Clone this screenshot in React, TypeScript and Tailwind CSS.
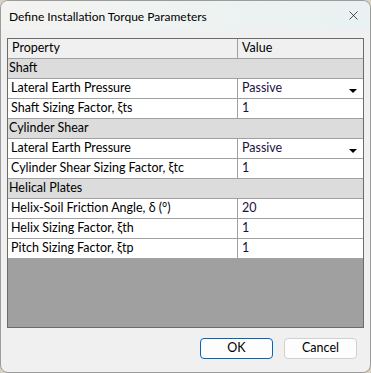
import { X } from 'lucide-react'

type Row =
  | { kind: 'cat'; label: string }
  | { kind: 'prop'; label: string; value: string; combo?: boolean }

const rows: Row[] = [
  { kind: 'cat', label: 'Shaft' },
  { kind: 'prop', label: 'Lateral Earth Pressure', value: 'Passive', combo: true },
  { kind: 'prop', label: 'Shaft Sizing Factor, ξts', value: '1' },
  { kind: 'cat', label: 'Cylinder Shear' },
  { kind: 'prop', label: 'Lateral Earth Pressure', value: 'Passive', combo: true },
  { kind: 'prop', label: 'Cylinder Shear Sizing Factor, ξtc', value: '1' },
  { kind: 'cat', label: 'Helical Plates' },
  { kind: 'prop', label: 'Helix-Soil Friction Angle, δ (°)', value: '20' },
  { kind: 'prop', label: 'Helix Sizing Factor, ξth', value: '1' },
  { kind: 'prop', label: 'Pitch Sizing Factor, ξtp', value: '1' },
]

function GridRow({ row }: { row: Row }) {
  if (row.kind === 'cat') {
    return (
      <div className="h-[20px] flex items-center pl-[1px] bg-[#dcdcdc] border-b border-[#a0a0a0]">
        {row.label}
      </div>
    )
  }
  return (
    <div className="h-[20px] flex bg-white border-b border-[#a0a0a0]">
      <div className="w-[230px] shrink-0 flex items-center pl-[3px] border-r border-[#a0a0a0]">
        {row.label}
      </div>
      <div className="flex-1 flex items-center pl-[4px] pr-[6px] text-[#1b1040]">
        <span className="flex-1">{row.value}</span>
        {row.combo && (
          <span className="mt-[4px] w-0 h-0 border-l-[4px] border-r-[4px] border-t-[4px] border-l-transparent border-r-transparent border-t-black" />
        )}
      </div>
    </div>
  )
}

export default function App() {
  return (
    <div className="w-[371px] h-[373px] bg-[#d8d2c6]">
      <div
        className="w-[371px] h-[373px] rounded-[8px] border border-[#9c9c9c] bg-[#f0f0f0] overflow-hidden flex flex-col text-[12.5px] text-black"
        style={{ fontFamily: 'Lato, "Noto Sans", sans-serif' }}
      >
        <div className="h-[29px] shrink-0 flex items-center justify-between pl-[8px] pr-[9px] bg-gradient-to-r from-[#f3f3f1] via-[#eef3f1] to-[#e9f1f2]">
          <span className="leading-none text-[12px] pt-[2px]">Define Installation Torque Parameters</span>
          <X size={15} strokeWidth={1.2} className="text-[#1a1a1a]" />
        </div>

        <div className="mt-[8px] ml-[6px] w-[357px] h-[290px] border border-[#6b6b6b] bg-[#a0a0a0] flex flex-col">
          <div className="h-[20px] flex bg-[#f0f0f0] border-b border-[#a0a0a0]">
            <div className="w-[230px] shrink-0 flex items-center pl-[4px] border-r border-[#a0a0a0]">
              Property
            </div>
            <div className="flex-1 flex items-center pl-[4px]">Value</div>
          </div>
          {rows.map((r, i) => (
            <GridRow key={i} row={r} />
          ))}
        </div>

        <div className="mt-[10px] flex justify-end gap-[11px] pr-[13px]">
          <button className="w-[73px] h-[21px] rounded-[4px] border border-[#0067c0] bg-[#fdfdfd] flex items-center justify-center">
            OK
          </button>
          <button className="w-[73px] h-[21px] rounded-[4px] border border-[#d0d0d0] bg-[#fdfdfd] flex items-center justify-center">
            Cancel
          </button>
        </div>
      </div>
    </div>
  )
}
